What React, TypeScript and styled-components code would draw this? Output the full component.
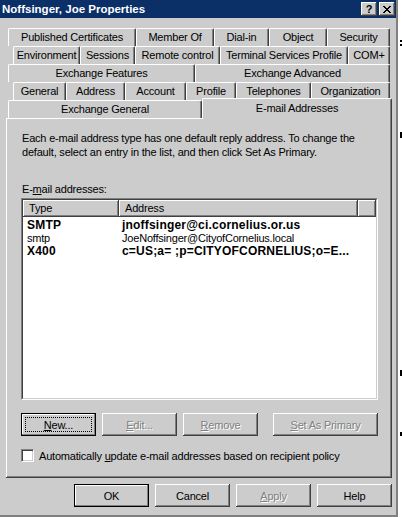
import React from 'react'
import styled, { createGlobalStyle } from 'styled-components'

const FACE = '#cccccc'
const SHADOW = '#808080'
const DARK = '#404040'
const FONT = '"Liberation Sans", Arial, sans-serif'

const GlobalStyle = createGlobalStyle`
  html, body { margin: 0; padding: 0; background: #fff; }
  body { font-family: ${FONT}; font-size: 11px; letter-spacing: -0.2px; color: #000; }
`

type TabDef = { label: string; w: number; selected?: boolean }

const TAB_ROWS: { indent: number; tabs: TabDef[] }[] = [
  { indent: 2, tabs: [
    { label: 'Published Certificates', w: 128 },
    { label: 'Member Of', w: 78 },
    { label: 'Dial-in', w: 55 },
    { label: 'Object', w: 58 },
    { label: 'Security', w: 63 },
  ] },
  { indent: 7, tabs: [
    { label: 'Environment', w: 67 },
    { label: 'Sessions', w: 55 },
    { label: 'Remote control', w: 85 },
    { label: 'Terminal Services Profile', w: 128 },
    { label: 'COM+', w: 42 },
  ] },
  { indent: 2, tabs: [
    { label: 'Exchange Features', w: 187 },
    { label: 'Exchange Advanced', w: 195 },
  ] },
  { indent: 7, tabs: [
    { label: 'General', w: 53 },
    { label: 'Address', w: 59 },
    { label: 'Account', w: 61 },
    { label: 'Profile', w: 50 },
    { label: 'Telephones', w: 75 },
    { label: 'Organization', w: 79 },
  ] },
  { indent: 2, tabs: [
    { label: 'Exchange General', w: 194 },
    { label: 'E-mail Addresses', w: 190, selected: true },
  ] },
]

const ADDRESSES = [
  { type: 'SMTP', address: 'jnoffsinger@ci.cornelius.or.us', primary: true },
  { type: 'smtp', address: 'JoeNoffsinger@CityofCornelius.local', primary: false },
  { type: 'X400', address: 'c=US;a= ;p=CITYOFCORNELIUS;o=E...', primary: true },
]

const Screen = styled.div`
  display: flex;
  align-items: flex-start;
`

const Window = styled.div`
  width: 396px;
  height: 515px;
  display: flex;
  flex-direction: column;
  background: ${FACE};
  border-right: 2px solid;
  border-bottom: 2px solid;
  border-color: ${SHADOW};
  box-shadow: 1px 1px 0 ${DARK};
`

const TitleBar = styled.div`
  height: 18px;
  flex: none;
  display: flex;
  align-items: center;
  justify-content: space-between;
  padding: 0 1px 0 2px;
  background: #0b3068;
`

const Title = styled.span`
  color: #fff;
  font-weight: bold;
  font-size: 11.5px;
  letter-spacing: 0;
  white-space: nowrap;
`

const TitleButtons = styled.div`
  display: flex;
  gap: 2px;
`

const CaptionButton = styled.div`
  width: 16px;
  height: 14px;
  display: flex;
  align-items: center;
  justify-content: center;
  background: ${FACE};
  box-shadow: inset -1px -1px ${DARK}, inset 1px 1px #fff, inset -2px -2px ${SHADOW};
  font-weight: bold;
  font-size: 11px;
  line-height: 14px;
`

const Client = styled.div`
  flex: 1;
  display: flex;
  flex-direction: column;
  padding: 10px 0 0 6px;
`

const TabRow = styled.div<{ $indent: number }>`
  display: flex;
  align-items: flex-start;
  height: 18px;
  padding-left: ${p => p.$indent}px;
`

const Tab = styled.div<{ $w: number; $selected?: boolean }>`
  box-sizing: border-box;
  flex: none;
  width: ${p => p.$w}px;
  height: ${p => (p.$selected ? 21 : 18)}px;
  margin-top: ${p => (p.$selected ? -2 : 0)}px;
  margin-bottom: ${p => (p.$selected ? -1 : 0)}px;
  position: relative;
  z-index: ${p => (p.$selected ? 1 : 0)};
  display: flex;
  align-items: center;
  justify-content: center;
  padding-bottom: ${p => (p.$selected ? 3 : 1)}px;
  background: ${FACE};
  border-top: 1px solid #fff;
  border-left: 1px solid #fff;
  border-right: 1px solid ${DARK};
  border-radius: 2px 2px 0 0;
  box-shadow: inset -1px 0 ${SHADOW};
  white-space: nowrap;
`

const Panel = styled.div`
  box-sizing: border-box;
  width: 386px;
  height: 360px;
  flex: none;
  display: flex;
  flex-direction: column;
  padding: 13px 15px 0;
  background: ${FACE};
  box-shadow: inset -1px -1px ${DARK}, inset 1px 1px #fff, inset -2px -2px ${SHADOW};
`

const Intro = styled.p`
  margin: 0;
  padding-left: 1px;
  line-height: 14px;
  white-space: nowrap;
`

const FieldLabel = styled.div`
  margin-top: 23px;
  padding-left: 1px;
  line-height: 14px;
`

const ListFrame = styled.div`
  box-sizing: border-box;
  width: 357px;
  height: 202px;
  margin-top: 2px;
  border: 1px solid;
  border-color: ${SHADOW} #fff #fff ${SHADOW};
`

const ListInner = styled.div`
  box-sizing: border-box;
  height: 100%;
  background: #fff;
  border: 1px solid;
  border-color: ${DARK} ${FACE} ${FACE} ${DARK};
`

const Columns = `96px 239px 1fr`

const Header = styled.div`
  display: grid;
  grid-template-columns: ${Columns};
  height: 17px;
`

const HeaderCell = styled.div`
  display: flex;
  align-items: center;
  padding: 0 0 1px 6px;
  background: ${FACE};
  box-shadow: inset -1px -1px ${DARK}, inset 1px 1px #fff, inset -2px -2px ${SHADOW};
`

const Rows = styled.div`
  padding-top: 2px;
`

const Row = styled.div<{ $bold?: boolean }>`
  display: grid;
  grid-template-columns: ${Columns};
  height: 13px;
  line-height: 13px;
  font-weight: ${p => (p.$bold ? 'bold' : 'normal')};
  font-size: ${p => (p.$bold ? 12 : 11)}px;
  letter-spacing: ${p => (p.$bold ? '0.2px' : '-0.2px')};
  white-space: pre;
`

const Cell = styled.div<{ $pad: number }>`
  padding-left: ${p => p.$pad}px;
  overflow: hidden;
`

const ActionRow = styled.div`
  display: flex;
  margin-top: 13px;
  width: 357px;
`

const ButtonGroup = styled.div`
  display: flex;
  gap: 6px;
`

const Button = styled.div<{ $w?: number; $default?: boolean; $focused?: boolean; $disabled?: boolean }>`
  box-sizing: border-box;
  width: ${p => p.$w ?? 75}px;
  height: 23px;
  flex: none;
  display: flex;
  align-items: center;
  justify-content: center;
  background: ${FACE};
  box-shadow: ${p =>
    p.$default
      ? `inset 0 0 0 1px #000, inset -2px -2px ${SHADOW}, inset 2px 2px #fff`
      : `inset -1px -1px ${DARK}, inset 1px 1px #fff, inset -2px -2px ${SHADOW}`};
  color: ${p => (p.$disabled ? SHADOW : '#000')};
  text-shadow: ${p => (p.$disabled ? '1px 1px 0 #fff' : 'none')};
  outline: ${p => (p.$focused ? '1px dotted #000' : 'none')};
  outline-offset: -5px;
  margin-left: ${p => (p.$w && p.$w > 75 ? 'auto' : '0')};
  white-space: nowrap;
`

const CheckRow = styled.label`
  display: flex;
  align-items: center;
  gap: 5px;
  margin-top: 13px;
`

const CheckBox = styled.span`
  box-sizing: border-box;
  width: 13px;
  height: 13px;
  flex: none;
  background: #fff;
  border: 1px solid;
  border-color: ${SHADOW} #fff #fff ${SHADOW};
  box-shadow: inset 1px 1px ${DARK}, inset -1px -1px ${FACE};
`

const DialogButtons = styled.div`
  display: flex;
  justify-content: flex-end;
  gap: 6px;
  width: 386px;
  margin-top: 6px;
`

const Desktop = styled.div`
  width: 4px;
  height: 517px;
  background:
    linear-gradient(#000, #000) 2px 40px / 2px 2px no-repeat,
    linear-gradient(#000, #000) 2px 44px / 2px 2px no-repeat,
    linear-gradient(#000, #000) 2px 132px / 2px 6px no-repeat,
    linear-gradient(#000, #000) 2px 370px / 2px 6px no-repeat,
    linear-gradient(#000, #000) 2px 432px / 2px 4px no-repeat,
    #fff;
`

const CloseGlyph = () => (
  <svg width="8" height="7" viewBox="0 0 8 7" shapeRendering="crispEdges">
    <path d="M0 0h2v1H0zM6 0h2v1H6zM1 1h2v1H1zM5 1h2v1H5zM2 2h4v1H2zM3 3h2v1H3zM2 4h4v1H2zM1 5h2v1H1zM5 5h2v1H5zM0 6h2v1H0zM6 6h2v1H6z" fill="#000" />
  </svg>
)

const App = () => {
  return (
    <Screen>
      <GlobalStyle />
      <Window>
        <TitleBar>
          <Title>Noffsinger, Joe Properties</Title>
          <TitleButtons>
            <CaptionButton>?</CaptionButton>
            <CaptionButton><CloseGlyph /></CaptionButton>
          </TitleButtons>
        </TitleBar>
        <Client>
          {TAB_ROWS.map((row, i) => (
            <TabRow key={i} $indent={row.indent}>
              {row.tabs.map(tab => (
                <Tab key={tab.label} $w={tab.w} $selected={tab.selected}>{tab.label}</Tab>
              ))}
            </TabRow>
          ))}
          <Panel>
            <Intro>
              Each e-mail address type has one default reply address. To change the<br />
              default, select an entry in the list, and then click Set As Primary.
            </Intro>
            <FieldLabel>E-<u>m</u>ail addresses:</FieldLabel>
            <ListFrame>
              <ListInner>
                <Header>
                  <HeaderCell>Type</HeaderCell>
                  <HeaderCell>Address</HeaderCell>
                  <HeaderCell />
                </Header>
                <Rows>
                  {ADDRESSES.map(a => (
                    <Row key={a.type} $bold={a.primary}>
                      <Cell $pad={4}>{a.type}</Cell>
                      <Cell $pad={3}>{a.address}</Cell>
                    </Row>
                  ))}
                </Rows>
              </ListInner>
            </ListFrame>
            <ActionRow>
              <ButtonGroup>
                <Button $default $focused><u>N</u>ew...</Button>
                <Button $disabled><u>E</u>dit...</Button>
                <Button $disabled><u>R</u>emove</Button>
              </ButtonGroup>
              <Button $w={105} $disabled><u>S</u>et As Primary</Button>
            </ActionRow>
            <CheckRow>
              <CheckBox />
              <span>Automatically <u>u</u>pdate e-mail addresses based on recipient policy</span>
            </CheckRow>
          </Panel>
          <DialogButtons>
            <Button $default>OK</Button>
            <Button>Cancel</Button>
            <Button $disabled><u>A</u>pply</Button>
            <Button>Help</Button>
          </DialogButtons>
        </Client>
      </Window>
      <Desktop />
    </Screen>
  )
}

export default App
